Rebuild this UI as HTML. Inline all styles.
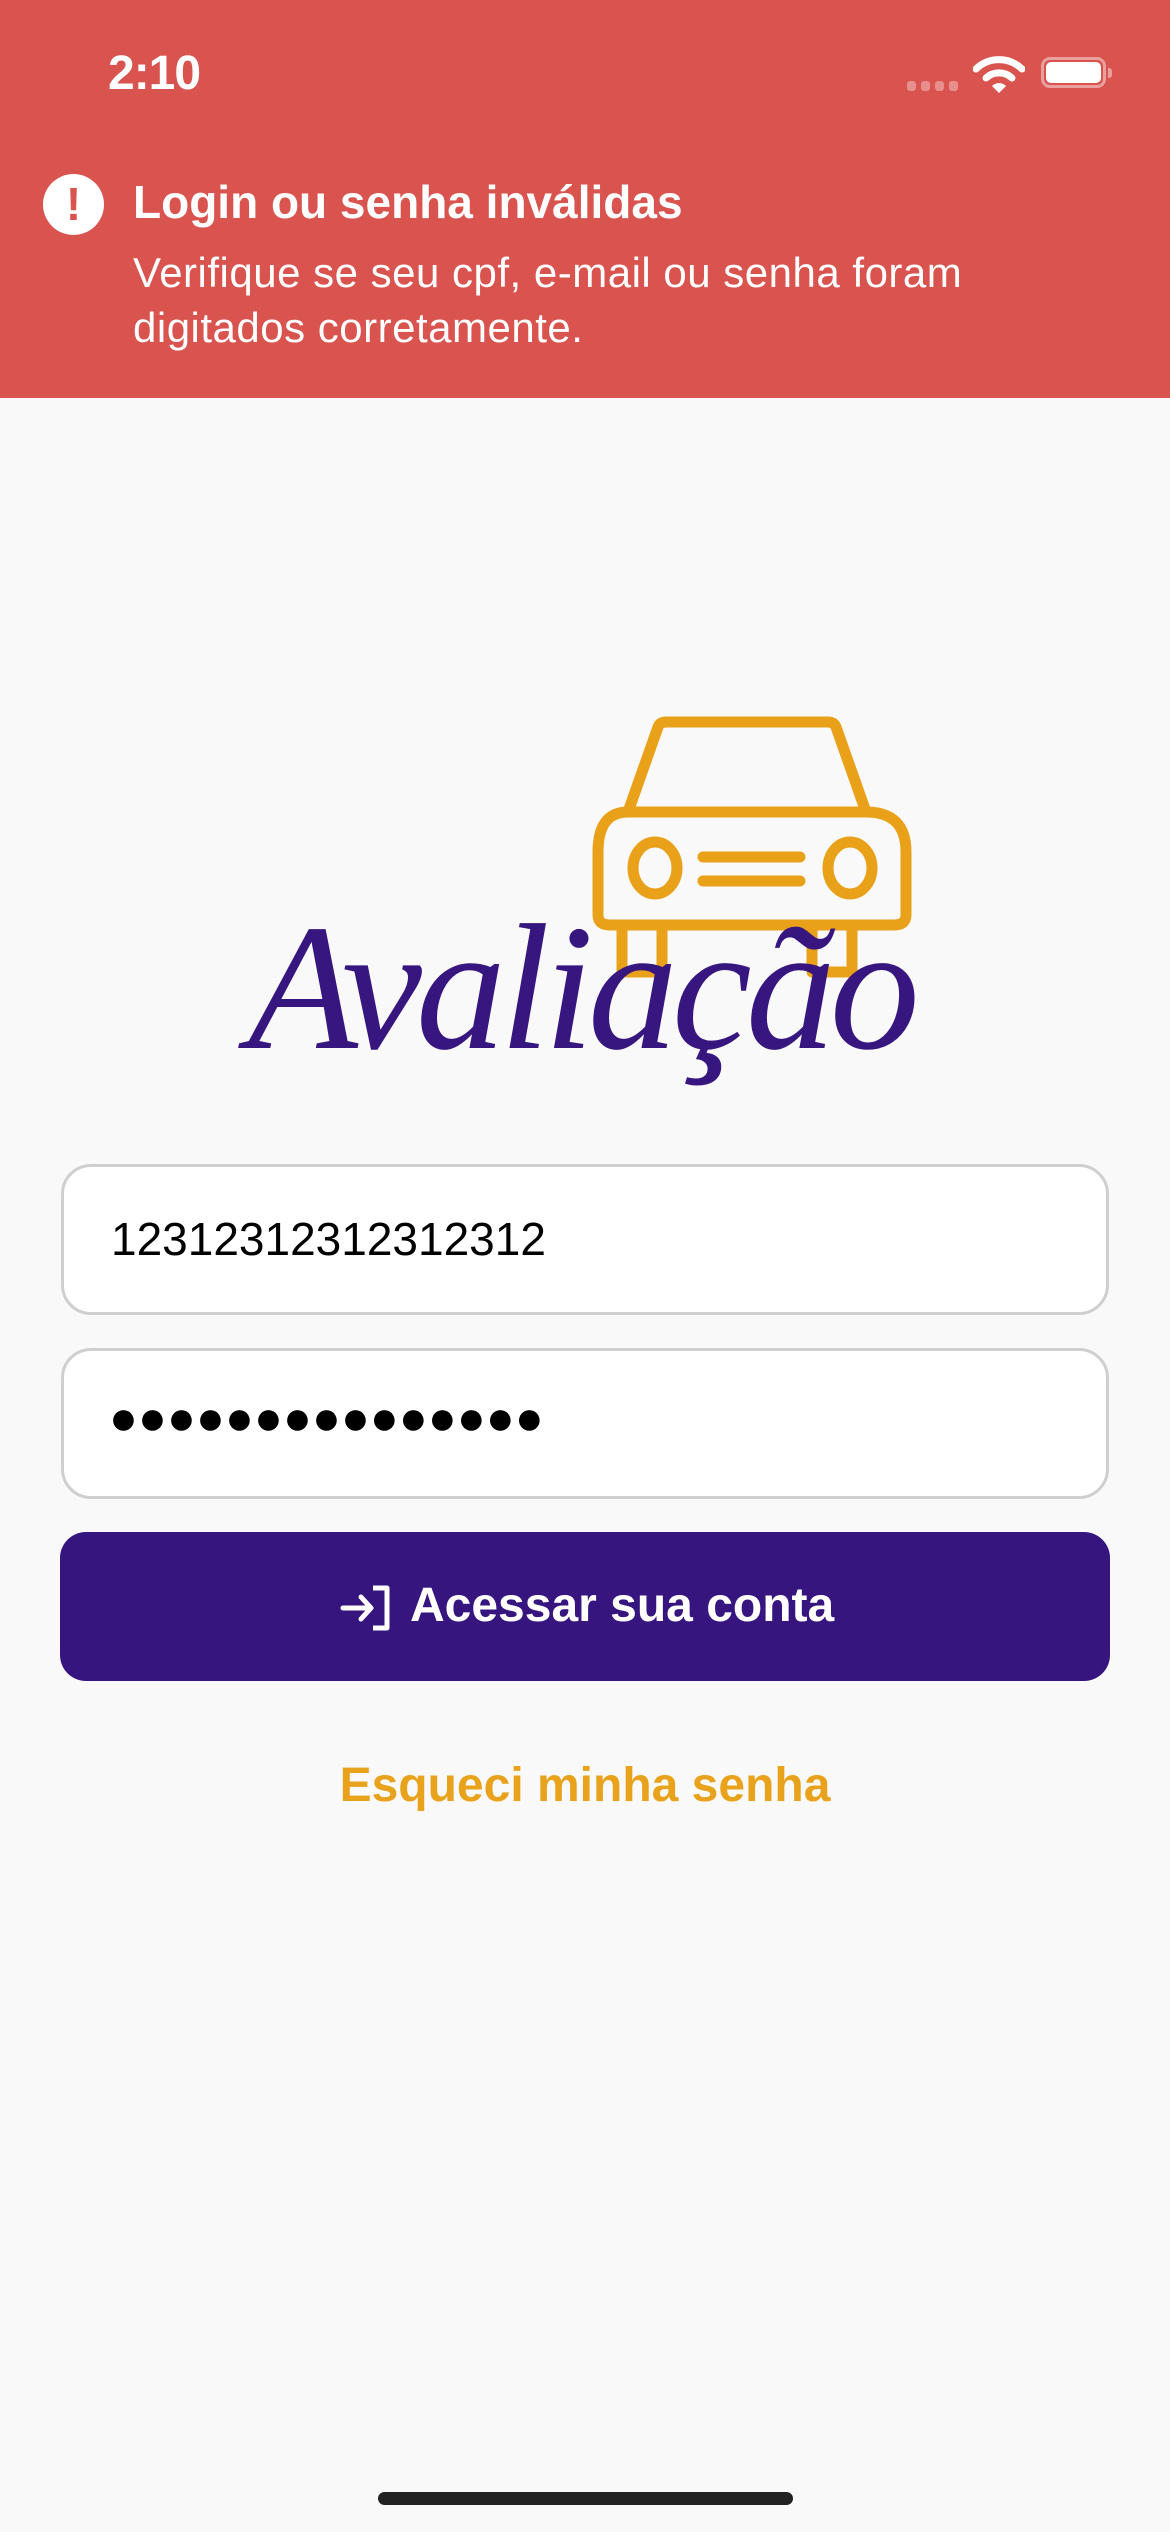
<!DOCTYPE html>
<html><head><meta charset="utf-8"><style>
*{margin:0;padding:0;box-sizing:border-box}
body{width:1170px;height:2532px;background:#f9f9f9;position:relative;overflow:hidden;font-family:"Liberation Sans",sans-serif}
.hdr{position:absolute;left:0;top:0;width:1170px;height:398px;background:#d9534f;color:#fff}
.abs{position:absolute}
.field{position:absolute;left:61px;width:1048px;height:151px;background:#fff;border:3px solid #cfcfcf;border-radius:30px}
</style></head><body>
<div class="hdr">
 <div class="abs" style="left:108px;top:46px;font-size:48px;font-weight:bold;letter-spacing:-1px">2:10</div>
 <div class="abs" style="left:907px;top:81px;width:9px;height:10px;border-radius:3px;background:rgba(255,255,255,.35)"></div>
 <div class="abs" style="left:921px;top:81px;width:9px;height:10px;border-radius:3px;background:rgba(255,255,255,.35)"></div>
 <div class="abs" style="left:935px;top:81px;width:9px;height:10px;border-radius:3px;background:rgba(255,255,255,.35)"></div>
 <div class="abs" style="left:949px;top:81px;width:9px;height:10px;border-radius:3px;background:rgba(255,255,255,.35)"></div>
 <svg class="abs" style="left:973px;top:55px" width="52" height="38" viewBox="0 0 52 38">
  <path d="M3 14 A33 33 0 0 1 49 14" stroke="#fff" stroke-width="7" fill="none" stroke-linecap="round"/>
  <path d="M13 23 A19 19 0 0 1 39 23" stroke="#fff" stroke-width="7" fill="none" stroke-linecap="round"/>
  <path d="M19 31 L26 38 L33 31 A10 10 0 0 0 19 31Z" fill="#fff"/>
 </svg>
 <div class="abs" style="left:1041px;top:57px;width:65px;height:31px;border:3px solid rgba(255,255,255,.45);border-radius:9px"></div>
 <div class="abs" style="left:1046px;top:62px;width:55px;height:21px;background:#fff;border-radius:5px"></div>
 <div class="abs" style="left:1108px;top:68px;width:4px;height:10px;background:rgba(255,255,255,.45);border-radius:0 3px 3px 0"></div>
 <div class="abs" style="left:43px;top:174px;width:61px;height:61px;border-radius:50%;background:#fff;color:#d9534f;font-weight:bold;font-size:46px;text-align:center;line-height:61px">!</div>
 <div class="abs" style="left:133px;top:175px;font-size:46px;font-weight:bold;white-space:nowrap">Login ou senha inválidas</div>
 <div class="abs" style="left:133px;top:245px;font-size:42px;line-height:55px;letter-spacing:0.5px;white-space:nowrap">Verifique se seu cpf, e-mail ou senha foram<br>digitados corretamente.</div>
</div>

<svg class="abs" style="left:590px;top:712px" width="330" height="270" viewBox="590 712 330 270">
 <g stroke="#eaa11a" stroke-width="11" fill="none" stroke-linejoin="round" stroke-linecap="round">
  <path d="M628 812 L658 727 Q660 722 666 722 L828 722 Q834 722 836 727 L866 812"/>
  <path d="M628 812 L866 812 Q906 812 906 852 L906 915 Q906 925 894 925 L610 925 Q598 925 598 915 L598 852 Q598 812 628 812Z"/>
  <ellipse cx="655" cy="868" rx="22" ry="26"/>
  <ellipse cx="850" cy="868" rx="22" ry="26"/>
  <path d="M703 857 L800 857 M703 881 L800 881"/>
  <path d="M622 925 L622 972 L662 972 L662 925"/>
  <path d="M812 925 L812 972 L852 972 L852 925"/>
 </g>
</svg>
<div class="abs" style="left:248px;top:888px;font-family:'Liberation Serif',serif;font-style:italic;font-size:180px;line-height:200px;color:#37167f;letter-spacing:-6px;white-space:nowrap">Avaliação</div>

<div class="field" style="top:1164px"><div class="abs" style="left:47px;top:45px;font-size:46px;color:#000">12312312312312312</div></div>
<div class="field" style="top:1348px"><div class="abs" style="left:45px;top:40px;font-size:48px;color:#000">●●●●●●●●●●●●●●●</div></div>

<div class="abs" style="left:60px;top:1532px;width:1050px;height:149px;background:#36157f;border-radius:26px"></div>
<svg class="abs" style="left:339px;top:1585px" width="54" height="46" viewBox="0 0 54 46">
 <path d="M4 23 L32 23 M22 12 L32 23 L22 34" stroke="#fff" stroke-width="5" fill="none" stroke-linecap="round" stroke-linejoin="round"/>
 <path d="M34 3 L48 3 L48 43 L34 43" stroke="#fff" stroke-width="5" fill="none" stroke-linejoin="round"/>
</svg>
<div class="abs" style="left:410px;top:1578px;font-size:48px;font-weight:bold;color:#fff;white-space:nowrap">Acessar sua conta</div>

<div class="abs" style="left:0;width:1170px;top:1758px;text-align:center;font-size:48px;font-weight:bold;color:#e9a21b">Esqueci minha senha</div>

<div class="abs" style="left:378px;top:2492px;width:415px;height:13px;border-radius:7px;background:#222"></div>
</body></html>
